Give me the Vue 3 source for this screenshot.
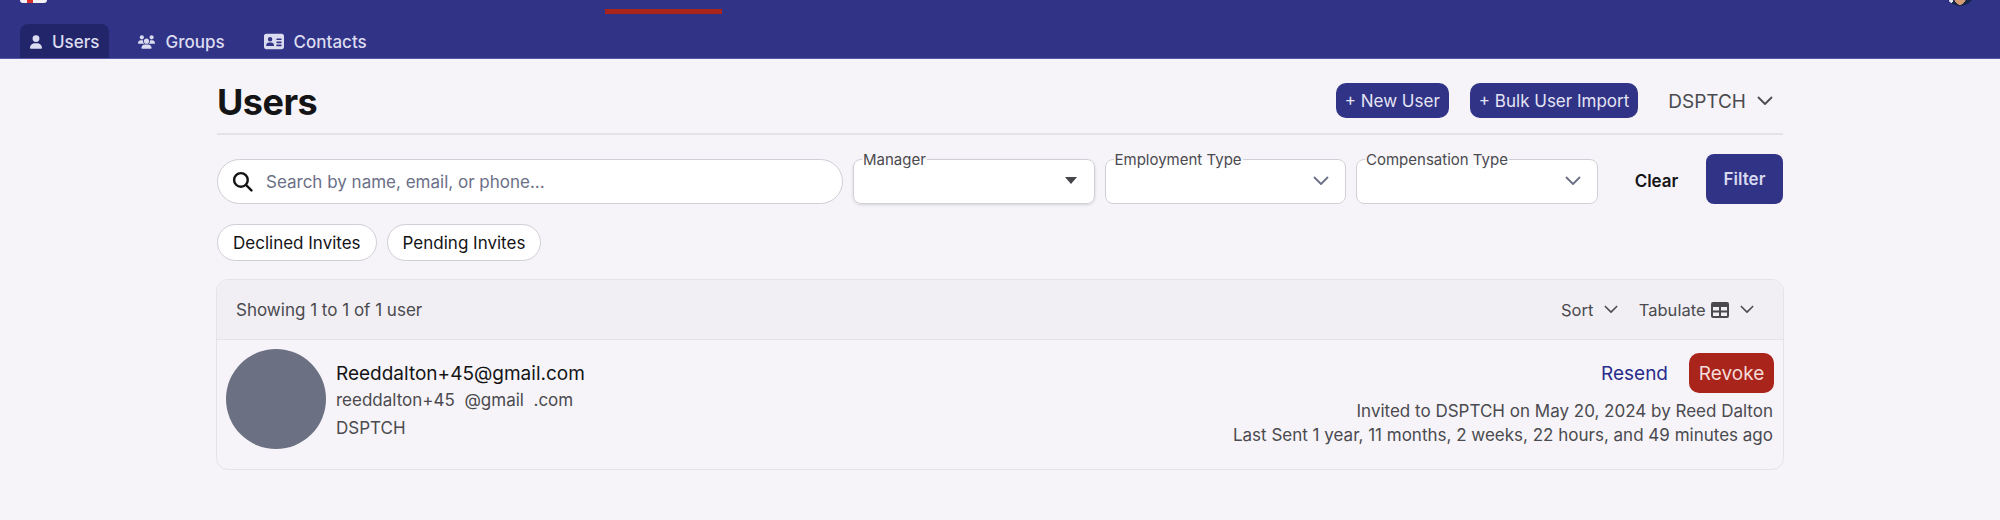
<template>
  <div class="page">
    <header class="topbar">
      <div class="top-row">
        <div class="logo">
          <span class="logo-left"></span>
          <span class="logo-red"></span>
          <span class="logo-right"></span>
        </div>
        <span class="active-bar"></span>
        <span class="top-avatar"></span>
      </div>
      <nav class="tabs">
        <a v-for="tab in tabs" :key="tab.label" class="tab" :class="{ active: tab.active }">
          <svg v-if="tab.label === 'Users'" class="tab-icon user-icon" viewBox="0 0 448 512" fill="currentColor">
            <path d="M224 256a128 128 0 1 0 0-256 128 128 0 1 0 0 256zm-45.700 48C79.800 304 0 383.800 0 482.300 0 498.700 13.300 512 29.700 512h388.600c16.400 0 29.700-13.300 29.700-29.700C448 383.800 368.200 304 269.700 304h-91.400z" />
          </svg>
          <svg v-else-if="tab.label === 'Groups'" class="tab-icon group-icon" viewBox="0 0 640 512" fill="currentColor">
            <path d="M144 0a80 80 0 1 1 0 160 80 80 0 1 1 0-160zm368 0a80 80 0 1 1 0 160 80 80 0 1 1 0-160zM0 298.700C0 239.800 47.800 192 106.700 192h42.700c15.900 0 31 3.500 44.600 9.700-1.300 7.200-1.900 14.700-1.900 22.300 0 38.200 16.800 72.500 43.300 96H21.300C9.600 320 0 310.400 0 298.700zM405.300 320h-.7c26.600-23.500 43.300-57.800 43.300-96 0-7.600-.7-15-1.900-22.300 13.600-6.300 28.700-9.700 44.600-9.700h42.700C592.200 192 640 239.800 640 298.700c0 11.800-9.600 21.300-21.300 21.300H405.300zM224 224a96 96 0 1 1 192 0 96 96 0 1 1-192 0zM128 485.300C128 411.700 187.700 352 261.300 352h117.300C452.300 352 512 411.700 512 485.300c0 14.700-11.900 26.700-26.700 26.700H154.700c-14.700 0-26.700-11.900-26.700-26.700z" />
          </svg>
          <svg v-else class="tab-icon card-icon" viewBox="0 0 576 512" fill="currentColor">
            <path d="M64 32C28.700 32 0 60.700 0 96v320c0 35.300 28.700 64 64 64h448c35.300 0 64-28.700 64-64V96c0-35.300-28.700-64-64-64H64zm112 224a64 64 0 1 1 0-128 64 64 0 1 1 0 128zm-32 32h64c44.200 0 80 35.800 80 80 0 8.800-7.200 16-16 16H80c-8.800 0-16-7.200-16-16 0-44.200 35.800-80 80-80zm232-120h112c13.300 0 24 10.700 24 24s-10.700 24-24 24H376c-13.300 0-24-10.700-24-24s10.700-24 24-24zm0 88h112c13.300 0 24 10.700 24 24s-10.700 24-24 24H376c-13.300 0-24-10.700-24-24s10.700-24 24-24zm0 88h112c13.300 0 24 10.700 24 24s-10.700 24-24 24H376c-13.300 0-24-10.700-24-24s10.700-24 24-24z" />
          </svg>
          {{ tab.label }}
        </a>
      </nav>
    </header>

    <main class="content">
      <div class="title-row">
        <h1>Users</h1>
        <div class="title-actions">
          <button class="btn-primary" type="button">+ New User</button>
          <button class="btn-primary" type="button">+ Bulk User Import</button>
          <span class="org-select">
            DSPTCH
            <svg class="chev org-chev" viewBox="0 0 16 10"><path d="M1.500 1.500 8 8l6.500-6.500" /></svg>
          </span>
        </div>
      </div>

      <div class="filter-row">
        <div class="search">
          <svg class="search-icon" viewBox="0 0 20 20" fill="none" stroke="currentColor" stroke-width="2.300" stroke-linecap="round">
            <circle cx="8.500" cy="8.500" r="6.500" />
            <path d="m13.500 13.500 5 5" />
          </svg>
          <span>Search by name, email, or phone...</span>
        </div>
        <fieldset v-for="sel in selects" :key="sel.label" class="select" :class="{ raised: sel.caret }">
          <legend>{{ sel.label }}</legend>
          <span v-if="sel.caret" class="caret"></span>
          <svg v-else class="chev select-chev" viewBox="0 0 16 10"><path d="M1.500 1.500 8 8l6.500-6.500" /></svg>
        </fieldset>
        <button class="btn-clear" type="button">Clear</button>
        <button class="btn-filter" type="button">Filter</button>
      </div>

      <div class="chips">
        <span class="chip">Declined Invites</span>
        <span class="chip">Pending Invites</span>
      </div>

      <section class="card">
        <div class="card-head">
          <span>Showing 1 to 1 of 1 user</span>
          <div class="head-tools">
            <span class="tool">
              Sort
              <svg class="chev tool-chev" viewBox="0 0 16 10"><path d="M1.500 1.500 8 8l6.500-6.500" /></svg>
            </span>
            <span class="tool">
              Tabulate
              <svg class="table-icon" viewBox="0 0 18 16">
                <path fill="currentColor" fill-rule="evenodd" d="M2 0h14a2 2 0 0 1 2 2v12a2 2 0 0 1-2 2H2a2 2 0 0 1-2-2V2a2 2 0 0 1 2-2zm0 5v3.500h6V5H2zm8 0v3.500h6V5h-6zm-8 5.500V14h6v-3.500H2zm8 0V14h6v-3.500h-6z" />
              </svg>
              <svg class="chev tool-chev" viewBox="0 0 16 10"><path d="M1.500 1.500 8 8l6.500-6.500" /></svg>
            </span>
          </div>
        </div>
        <div class="user-row">
          <div class="avatar"></div>
          <div class="user-info">
            <div class="user-email">Reeddalton+45@gmail.com</div>
            <div class="user-line">reeddalton+45&nbsp; @gmail &nbsp;.com</div>
            <div class="user-line">DSPTCH</div>
          </div>
          <div class="user-meta">
            <div class="meta-actions">
              <a class="resend">Resend</a>
              <button class="btn-revoke" type="button">Revoke</button>
            </div>
            <div class="meta-line">Invited to DSPTCH on May 20, 2024 by Reed Dalton</div>
            <div class="meta-line">Last Sent 1 year, 11 months, 2 weeks, 22 hours, and 49 minutes ago</div>
          </div>
        </div>
      </section>
    </main>
  </div>
</template>

<script setup>
const tabs = [
  { label: 'Users', active: true },
  { label: 'Groups' },
  { label: 'Contacts' }
]

const selects = [
  { label: 'Manager', caret: true },
  { label: 'Employment Type' },
  { label: 'Compensation Type' }
]
</script>

<style>
html,
body {
  margin: 0;
  background: #f6f4f8;
}
</style>

<style scoped>
.page {
  height: 520px;
  overflow: hidden;
  background: #f6f4f8;
  font-family: Inter, "Liberation Sans", sans-serif;
  font-size: 17px;
  color: #4a4a4f;
}

.topbar {
  height: 59px;
  box-sizing: border-box;
  background: #303386;
  border-bottom: 1px solid #5558a4;
  overflow: hidden;
}

.top-row {
  height: 24px;
  display: flex;
  align-items: flex-start;
}

.logo {
  display: flex;
  width: 27px;
  height: 3px;
  margin-left: 20px;
  border-radius: 0 0 3px 3px;
  overflow: hidden;
}

.logo-left {
  width: 7px;
  background: #f4f2f6;
}

.logo-right {
  flex: 1;
  background: #f4f2f6;
}

.logo-red {
  width: 6px;
  background: #d9302c;
}

.active-bar {
  width: 117px;
  height: 5px;
  margin: 9px 0 0 558px;
  background: #a9251c;
}

.top-avatar {
  width: 30px;
  height: 30px;
  margin: -24px 0 0 1223px;
  border-radius: 50%;
  background:
    radial-gradient(circle 2px at 20% 84%, #e8e6ee 0 90%, transparent 100%),
    radial-gradient(ellipse 7px 11px at 50% 60%, #d49a72 0 96%, transparent 100%),
    #16264a;
}

.tabs {
  display: flex;
  height: 34px;
  padding-left: 20px;
}

.tab {
  display: flex;
  align-items: center;
  gap: 10px;
  height: 34px;
  padding: 1px 10px 0;
  margin-right: 19px;
  box-sizing: border-box;
  border-radius: 8px 8px 0 0;
  color: #dcdcf0;
  font-size: 17px;
  font-weight: 500;
}

.tab.active {
  background: #23256a;
}

.tab-icon {
  flex: none;
}

.user-icon {
  width: 12px;
  height: 16px;
}

.group-icon {
  width: 17px;
  height: 14px;
}

.card-icon {
  width: 20px;
  height: 19px;
}

.content {
  width: 1566px;
  margin-left: 217px;
}

.title-row {
  height: 76px;
  padding-top: 9px;
  display: flex;
  align-items: center;
  justify-content: space-between;
  border-bottom: 2px solid #e4e3e8;
  box-sizing: border-box;
}

h1 {
  margin: 0;
  padding-top: 2px;
  font-size: 36px;
  font-weight: 700;
  color: #141417;
  letter-spacing: -0.5px;
}

.title-actions {
  display: flex;
  align-items: center;
  gap: 21px;
  padding-right: 10px;
}

.btn-primary {
  height: 35px;
  padding: 1px 9px 0;
  border: 0;
  border-radius: 10px;
  background: #303386;
  color: #e4e4f4;
  font: 400 17px Inter, "Liberation Sans", sans-serif;
}

.org-select {
  display: flex;
  align-items: center;
  gap: 11px;
  margin-left: 9px;
  padding-top: 1px;
  font-size: 19px;
  color: #4a4a4f;
}

.chev {
  fill: none;
  stroke: currentColor;
  stroke-width: 1.800;
  stroke-linecap: round;
  stroke-linejoin: round;
}

.org-chev {
  width: 16px;
  height: 10px;
}

.filter-row {
  display: flex;
  align-items: flex-end;
  margin-top: 19px;
  height: 50px;
}

.search {
  width: 626px;
  height: 45px;
  box-sizing: border-box;
  display: flex;
  align-items: center;
  gap: 13px;
  padding-left: 14px;
  margin-right: 10px;
  border: 1.500px solid #d0ced6;
  border-radius: 23px;
  background: #fff;
  color: #6b7087;
}

.search-icon {
  width: 21px;
  height: 21px;
  color: #141417;
}

.select {
  position: relative;
  width: 241.500px;
  height: 45px;
  box-sizing: border-box;
  margin: 0 10px 0 0;
  padding: 0;
  border: 1.500px solid #d0ced6;
  border-radius: 8px;
  background: #fff;
}

.select.raised {
  box-shadow: 0 1px 3px rgba(0, 0, 0, 0.14);
}

.select legend {
  position: absolute;
  top: -8px;
  left: 8px;
  padding: 0 1px;
  background: linear-gradient(#f6f4f8 50%, #fff 50%);
  font-size: 15px;
  line-height: 16px;
  color: #4a4a4f;
}

.caret {
  position: absolute;
  top: 17px;
  right: 17px;
  border-left: 6px solid transparent;
  border-right: 6px solid transparent;
  border-top: 7px solid #45454a;
}

.select-chev {
  position: absolute;
  top: 16px;
  right: 16px;
  width: 16px;
  height: 10px;
  color: #6b7087;
}

.btn-clear {
  margin: 0 0 0 22px;
  width: 54px;
  height: 45px;
  padding: 0 0 2px;
  border: 0;
  background: none;
  color: #141417;
  font: 600 17px Inter, "Liberation Sans", sans-serif;
}

.btn-filter {
  width: 77px;
  height: 50px;
  margin-left: auto;
  padding: 0;
  border: 0;
  border-radius: 8px;
  background: #303386;
  color: #d8d8ee;
  font: 600 17px Inter, "Liberation Sans", sans-serif;
}

.chips {
  display: flex;
  gap: 10px;
  margin-top: 20px;
}

.chip {
  height: 37px;
  box-sizing: border-box;
  display: flex;
  align-items: center;
  padding: 0 15px;
  border: 1.500px solid #d0ced6;
  border-radius: 19px;
  background: #fff;
  color: #141417;
  font-size: 17px;
}

.card {
  width: 1568px;
  margin: 18px 0 0 -1px;
  height: 191px;
  box-sizing: border-box;
  border: 1.500px solid #e4e3e8;
  border-radius: 12px;
  overflow: hidden;
}

.card-head {
  height: 60px;
  box-sizing: border-box;
  display: flex;
  align-items: center;
  justify-content: space-between;
  padding: 0 29.500px 0 19px;
  background: #f1eff3;
  border-bottom: 1.500px solid #e4e3e8;
}

.head-tools {
  display: flex;
  gap: 20.500px;
  font-size: 16.500px;
}

.tool {
  display: flex;
  align-items: center;
  gap: 5px;
}

.tool-chev {
  width: 14px;
  height: 9px;
  margin-left: 6px;
}

.table-icon {
  width: 18px;
  height: 16px;
}

.user-row {
  display: flex;
  padding: 9px 9px 0;
}

.avatar {
  flex: none;
  width: 100px;
  height: 100px;
  border-radius: 50%;
  background: #6b7082;
}

.user-info {
  margin-left: 10px;
  padding-top: 11px;
}

.user-email {
  font-size: 19px;
  line-height: 27px;
  color: #141417;
}

.user-line {
  line-height: 27.500px;
}

.user-meta {
  margin-left: auto;
  text-align: right;
  padding-top: 4px;
}

.meta-actions {
  display: flex;
  align-items: center;
  justify-content: flex-end;
  gap: 21px;
  margin-bottom: 5.500px;
}

.resend {
  font-size: 19px;
  color: #2a2c8c;
}

.btn-revoke {
  width: 85px;
  height: 40px;
  padding: 0;
  border: 0;
  border-radius: 10px;
  background: #a9251c;
  color: #f5dcd9;
  font: 400 19px Inter, "Liberation Sans", sans-serif;
}

.meta-line {
  padding-right: 1px;
  line-height: 24.500px;
}
</style>
